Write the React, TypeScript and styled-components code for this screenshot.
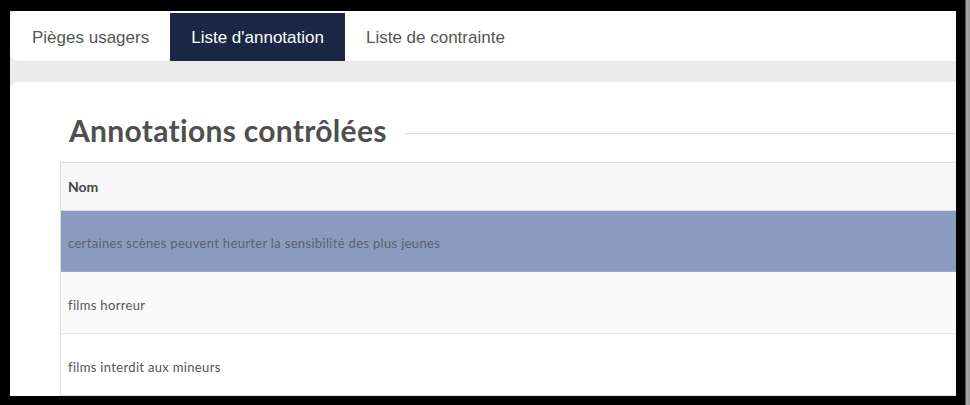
import React from 'react';
import styled, { createGlobalStyle } from 'styled-components';

interface Annotation {
  id: number;
  label: string;
}

const NAVY = '#1b2745';
const TEXT = '#555555';
const BORDER = '#dedede';

const ANNOTATIONS: Annotation[] = [
  { id: 1, label: 'certaines scènes peuvent heurter la sensibilité des plus jeunes' },
  { id: 2, label: 'films horreur' },
  { id: 3, label: 'films interdit aux mineurs' }
];

const TABS = ['Pièges usagers', "Liste d'annotation", 'Liste de contrainte'];

const GlobalStyle = createGlobalStyle`
  html, body {
    margin: 0;
    padding: 0;
    height: 405px;
    overflow: hidden;
  }

  body {
    background: linear-gradient(to right, #000 0, #000 965px, #a8a8a8 966px, #9a9a9a 970px);
  }
`;

const Screen = styled.div`
  width: 946px;
  height: 385px;
  margin: 11px 0 0 10px;
  overflow: hidden;
  background: #ebebeb;
  display: flex;
  flex-direction: column;
`;

const TabBar = styled.ul`
  display: flex;
  flex-shrink: 0;
  height: 50px;
  margin: 0;
  padding: 2px 0 0;
  box-sizing: border-box;
  list-style: none;
  background: #fff;
  border-radius: 8px 0 0 8px;
`;

const Tab = styled.li<{ $active?: boolean }>`
  display: flex;
  align-items: center;
  padding: 1px 21px 0;
  font-family: 'Liberation Sans', Arial, sans-serif;
  font-size: 17px;
  color: ${({ $active }) => ($active ? '#fff' : TEXT)};
  background: ${({ $active }) => ($active ? NAVY : 'transparent')};
  cursor: pointer;

  &:first-child {
    padding-left: 22px;
  }
`;

const Card = styled.section`
  flex: 1;
  margin-top: 21px;
  padding: 30px 0 0 50px;
  background: #fff;
  border-radius: 8px 0 0 0;
  font-family: Lato, 'Open Sans', sans-serif;
  color: ${TEXT};
`;

const TitleRow = styled.div`
  display: flex;
  align-items: center;
  gap: 18px;
  padding-left: 9px;
`;

const Title = styled.h2`
  margin: 0;
  font-size: 30px;
  line-height: 36px;
  font-weight: 700;
  letter-spacing: 0.3px;
  color: #4f4f4f;
  white-space: nowrap;
`;

const Rule = styled.div`
  flex: 1;
  height: 1px;
  margin-top: 7px;
  background: ${BORDER};
`;

const Table = styled.div`
  margin-top: 14px;
  width: calc(100% + 40px);
  border-left: 1px solid ${BORDER};
  border-top: 1px solid ${BORDER};
`;

const HeadRow = styled.div`
  display: flex;
  align-items: center;
  height: 47px;
  padding: 0 7px;
  background: #f7f7f7;
  border-bottom: 1px solid ${BORDER};
  font-size: 14px;
  font-weight: 700;
  color: #444;
`;

const Row = styled.div<{ $selected?: boolean; $striped?: boolean }>`
  display: flex;
  align-items: center;
  height: ${({ $selected }) => ($selected ? 61 : 62)}px;
  padding: 4px 7px 0;
  box-sizing: border-box;
  font-size: 13px;
  letter-spacing: 0.33px;
  color: ${({ $selected }) => ($selected ? '#5b6170' : TEXT)};
  background: ${({ $selected, $striped }) => ($selected ? '#8a9bbf' : $striped ? '#fafafa' : '#fff')};
  border-bottom: 1px solid ${({ $selected }) => ($selected ? '#97a6c6' : '#e3e3e3')};
`;

export default function App(): React.ReactElement {
  return (
    <>
      <GlobalStyle />
      <Screen>
        <TabBar>
          {TABS.map((tab, i) => (
            <Tab key={tab} $active={i === 1}>{tab}</Tab>
          ))}
        </TabBar>
        <Card>
          <TitleRow>
            <Title>Annotations contrôlées</Title>
            <Rule />
          </TitleRow>
          <Table>
            <HeadRow>Nom</HeadRow>
            {ANNOTATIONS.map((a, i) => (
              <Row key={a.id} $selected={i === 0} $striped={i === 1}>{a.label}</Row>
            ))}
          </Table>
        </Card>
      </Screen>
    </>
  );
}
